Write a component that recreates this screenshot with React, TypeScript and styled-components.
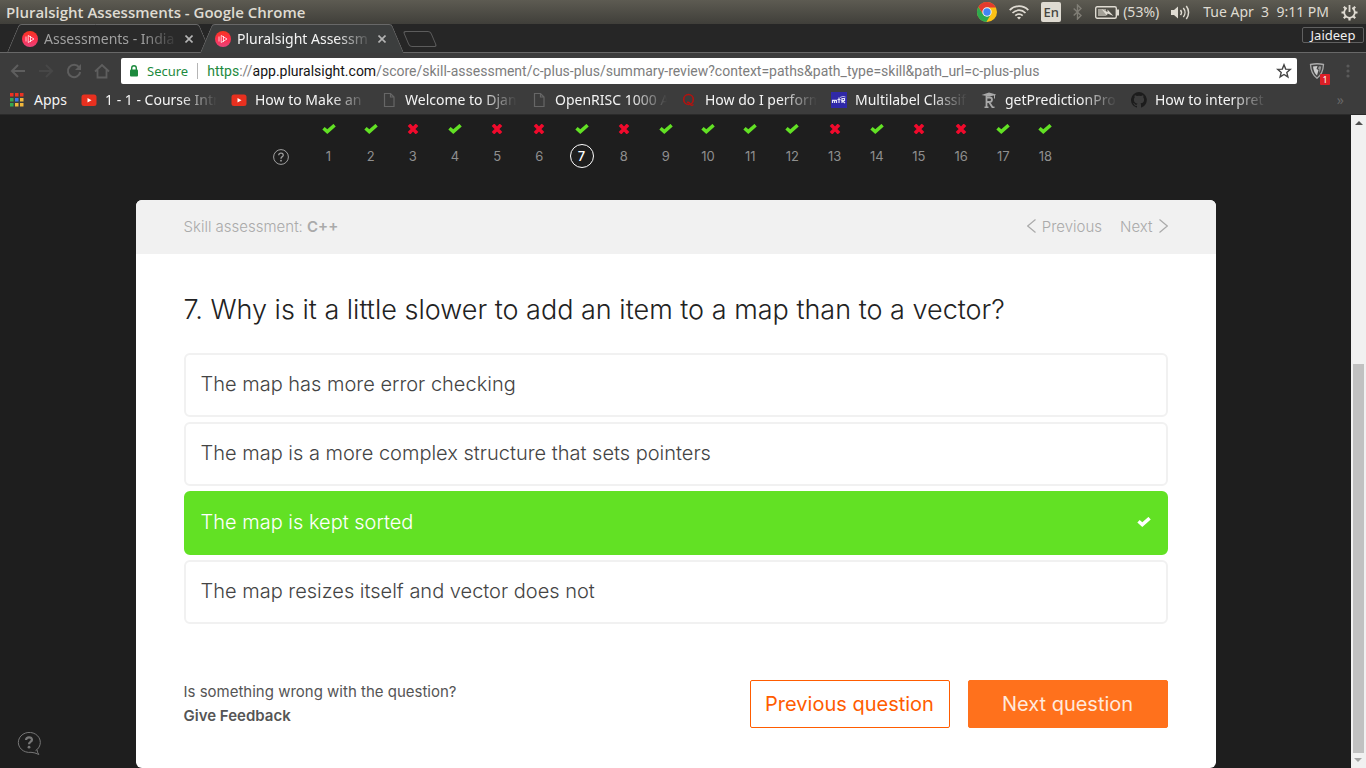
import React from "react";
import styled, { createGlobalStyle, css } from "styled-components";

const ui = `"Noto Sans", "Open Sans", sans-serif`;
const brand = `Inter, "Liberation Sans", sans-serif`;

const GlobalStyle = createGlobalStyle`
  *, *::before, *::after { box-sizing: border-box; }
  body { margin: 0; background: #1e1e1e; }
  button { font: inherit; color: inherit; background: none; border: 0; padding: 0; cursor: pointer; }
  h1, p, ul, ol { margin: 0; padding: 0; }
  ul, ol { list-style: none; }
  a { color: inherit; text-decoration: none; }
  svg { display: block; flex: none; }
`;

const Screen = styled.div`
  display: flex;
  flex-direction: column;
  min-height: 100vh;
  font-family: ${ui};
`;

/* Desktop panel */

const Panel = styled.header`
  display: flex;
  align-items: center;
  justify-content: space-between;
  height: 24px;
  padding: 0 8px 0 6px;
  background: linear-gradient(#5d5b52, #403f3a);
  color: #dfdbd2;
  font-size: 14px;
  line-height: 20px;
  white-space: nowrap;
`;

const WindowTitle = styled.strong`
  font-family: "Open Sans", sans-serif;
  font-size: 15px;
  font-weight: 600;
`;

const Indicators = styled.div`
  display: flex;
  align-items: center;
  gap: 12px;
`;

const Indicator = styled.span`
  display: flex;
  align-items: center;
  gap: 4px;
`;

const Keyboard = styled.span`
  width: 20px;
  height: 20px;
  border-radius: 2px;
  background: #dfdbd2;
  color: #45443e;
  font-size: 13px;
  font-weight: 500;
  line-height: 20px;
  text-align: center;
`;

/* Browser chrome */

const TabStrip = styled.nav`
  display: flex;
  height: 29px;
  padding: 0 2px 0 7px;
  background: #262626;
  border-bottom: 1px solid #686868;
`;

const Tab = styled.div<{ $active?: boolean }>`
  position: relative;
  z-index: ${(p) => (p.$active ? 1 : 0)};
  display: flex;
  align-items: center;
  gap: 6px;
  width: 204px;
  height: 29px;
  margin-right: -11px;
  padding: 0 18px 0 15px;
  font-size: 14px;
  color: ${(p) => (p.$active ? "#f4f4f4" : "#a0a0a0")};

  &::before,
  &::after {
    content: "";
    position: absolute;
    z-index: -1;
    top: 0;
    bottom: ${(p) => (p.$active ? 0 : 1)}px;
    width: calc(50% + 2px);
    background: ${(p) => (p.$active ? "#3c3e3e" : "#2a2a2a")};
    border-top: 1px solid #686868;
  }
  &::before {
    left: 6px;
    border-left: 1px solid #686868;
    border-top-left-radius: 3px;
    transform: skewX(-23deg);
  }
  &::after {
    right: 6px;
    border-right: 1px solid #686868;
    border-top-right-radius: 3px;
    transform: skewX(23deg);
  }
`;

const fade = css`
  overflow: hidden;
  white-space: nowrap;
  mask-image: linear-gradient(to right, #000 calc(100% - 36px), transparent);
`;

const TabTitle = styled.button`
  flex: 1;
  min-width: 0;
  text-align: left;
  ${fade}
`;

const NewTab = styled.button`
  width: 28px;
  height: 16px;
  margin: 7px 0 0 13px;
  border: 1px solid #5c5c5c;
  border-radius: 3px;
  transform: skewX(23deg);
`;

const Profile = styled.button`
  width: 62px;
  height: 16px;
  margin: 3px 0 0 auto;
  border: 1px solid #606060;
  border-radius: 2px;
  color: #f0f0f0;
  font-size: 13px;
  line-height: 14px;
`;

const Toolbar = styled.div`
  display: flex;
  align-items: center;
  height: 36px;
  padding: 0 16px 0 10px;
  background: #3c3c3c;
`;

const NavButtons = styled.div`
  display: flex;
  gap: 12px;
  margin-right: 11px;
`;

const ToolButton = styled.button<{ $dim?: boolean }>`
  color: ${(p) => (p.$dim ? "#474747" : "#5e5e5e")};
`;

const Omnibox = styled.div`
  display: flex;
  flex: 1;
  align-items: center;
  height: 26px;
  padding: 0 5px 0 8px;
  border-radius: 2px;
  background: #fff;
  font-family: Roboto, sans-serif;
  font-size: 14px;
  color: #7d7d7d;
  white-space: nowrap;
`;

const Secure = styled.span`
  display: flex;
  align-items: center;
  gap: 8px;
  margin-right: 9px;
  padding-right: 9px;
  border-right: 1px solid #b5b5b5;
  font-family: ${ui};
  font-size: 13px;
  line-height: 16px;
  color: #1d8a3e;
`;

const Green = styled.span`
  color: #1d8a3e;
`;

const Host = styled.span`
  color: #141414;
`;

const UrlPath = styled.input`
  flex: 1;
  min-width: 0;
  padding: 0;
  border: 0;
  outline: 0;
  background: none;
  color: inherit;
  font: inherit;
`;

const Extension = styled.button`
  position: relative;
  margin: 0 21px 0 12px;
`;

const Badge = styled.span`
  position: absolute;
  left: 11px;
  top: 11px;
  width: 10px;
  height: 11px;
  border-radius: 1px;
  background: #dc1f26;
  color: #fff;
  font-size: 9px;
  line-height: 11px;
  text-align: center;
`;

const Bookmarks = styled.nav`
  display: flex;
  align-items: center;
  height: 26px;
  padding: 0 22px 3px 10px;
  background: #3c3c3c;
  border-bottom: 1px solid #2a2a2a;
  color: #f4f4f4;
  font-size: 14px;
  line-height: 20px;
`;

const AppsLink = styled.a`
  display: flex;
  align-items: center;
  gap: 10px;
  width: 71px;
`;

const Bookmark = styled.a`
  display: flex;
  align-items: center;
  gap: 8px;
  width: 150px;
  padding-right: 14px;
`;

const BookmarkLabel = styled.span`
  flex: 1;
  ${fade}
`;

const More = styled.button`
  margin-left: auto;
  color: #666;
`;

/* Page */

const Viewport = styled.div`
  display: flex;
  flex: 1;
  background: #1e1e1e;
  font-family: ${brand};
`;

const Page = styled.main`
  flex: 1;
  min-width: 0;
`;

const Column = styled.div`
  width: 100%;
  max-width: 1080px;
  margin: 0 auto;
`;

const Progress = styled.div`
  display: flex;
  align-items: flex-end;
  gap: 28px;
  height: 85px;
  padding: 0 158px 32px 137px;
`;

const HelpButton = styled.button`
  height: 22px;
  color: #a0a0a0;
`;

const Steps = styled.ol`
  display: flex;
  flex: 1;
  justify-content: space-between;
`;

const Step = styled.li`
  display: flex;
  flex-direction: column;
  align-items: center;
  gap: 10px;
  width: 24px;
`;

const StepNumber = styled.button<{ $current: boolean }>`
  width: 24px;
  height: 24px;
  border-radius: 50%;
  border: 1px solid ${(p) => (p.$current ? "#fff" : "transparent")};
  color: ${(p) => (p.$current ? "#fff" : "#8f8f8f")};
  font-size: 13px;
  font-weight: ${(p) => (p.$current ? 500 : 400)};
  line-height: 22px;
`;

const Card = styled.section`
  border-radius: 6px;
  overflow: hidden;
  background: #fff;
`;

const CardHeader = styled.div`
  display: flex;
  align-items: center;
  justify-content: space-between;
  height: 54px;
  padding: 0 48px 2px;
  background: #f1f1f1;
  color: #aaa;
  font-size: 15px;
  font-weight: 300;
`;

const Skill = styled.strong`
  font-weight: 600;
`;

const Pager = styled.div`
  display: flex;
  gap: 18px;
`;

const PagerLink = styled.a`
  display: flex;
  align-items: center;
  gap: 6px;
`;

const CardBody = styled.div`
  padding: 38px 48px 40px;
`;

const Question = styled.h1`
  margin-bottom: 25px;
  color: #222;
  font-size: 27px;
  font-weight: 300;
  line-height: 36px;
`;

const Answers = styled.ul`
  display: flex;
  flex-direction: column;
  gap: 5px;
`;

const Answer = styled.li<{ $correct: boolean }>`
  display: flex;
  align-items: center;
  justify-content: space-between;
  height: 64px;
  padding: 0 15px 2px;
  border: 2px solid ${(p) => (p.$correct ? "#62e124" : "#f1f1f1")};
  border-radius: 6px;
  background: ${(p) => (p.$correct ? "#62e124" : "#fff")};
  color: ${(p) => (p.$correct ? "#fff" : "#444")};
  font-size: 20px;
  font-weight: 300;
`;

const Footer = styled.footer`
  display: flex;
  align-items: center;
  justify-content: space-between;
  margin-top: 56px;
`;

const Feedback = styled.p`
  color: #555;
  font-size: 15px;
  line-height: 24px;
`;

const FeedbackLink = styled.a`
  display: block;
  font-weight: 600;
`;

const Actions = styled.div`
  display: flex;
  gap: 18px;
`;

const ActionButton = styled.button<{ $primary?: boolean }>`
  width: 200px;
  height: 48px;
  border: 1px solid ${(p) => (p.$primary ? "#ff711c" : "#ff5c00")};
  border-radius: 2px;
  background: ${(p) => (p.$primary ? "#ff711c" : "#fff")};
  color: ${(p) => (p.$primary ? "#ffe9dc" : "#ff5c00")};
  font-size: 20px;
`;

const Scrollbar = styled.div`
  display: flex;
  flex-direction: column;
  width: 15px;
  padding: 0 2px;
  background: #f1f1f1;
`;

const Arrow = styled.div<{ $down?: boolean }>`
  display: flex;
  align-items: center;
  justify-content: center;
  height: 15px;
  transform: ${(p) => (p.$down ? "rotate(180deg)" : "none")};
`;

const Track = styled.div`
  display: grid;
  flex: 1;
  grid-template-rows: 3fr 5fr;
`;

const Thumb = styled.div`
  grid-row: 2;
  background: #c1c1c1;
`;

const Support = styled.button`
  position: fixed;
  left: 17px;
  bottom: 12px;
  color: #777;
`;

/* Icons */

const Check = () => (
  <svg width="14" height="10" viewBox="0 0 14 10" fill="none" stroke="currentColor" strokeWidth="3.500" strokeLinejoin="miter">
    <path d="M1.500 4.200 5.300 7.600 12.600 1.200" />
  </svg>
);

const Cross = () => (
  <svg width="14" height="10" viewBox="0 0 14 10" fill="none" stroke="currentColor" strokeWidth="3.600">
    <path d="m3 .8 8 8.400M11 .8 3 9.200" />
  </svg>
);

const Play = () => (
  <svg width="16" height="16" viewBox="0 0 16 16">
    <defs>
      <linearGradient id="play" x1="0" y1="0" x2="0" y2="1">
        <stop offset="0" stopColor="#f5351f" />
        <stop offset="0.5" stopColor="#ff2f4b" />
        <stop offset="1" stopColor="#e8447c" />
      </linearGradient>
    </defs>
    <circle cx="8" cy="8" r="8" fill="url(#play)" />
    <path d="M4 5.500v5M6.200 4.500v7L12 8 6.200 4.500M8.500 5v6" fill="none" stroke="#fff" strokeOpacity="0.75" />
  </svg>
);

const Close = () => (
  <svg width="8" height="8" viewBox="0 0 8 8" stroke="#b4b4b4" strokeWidth="1.6">
    <path d="m.5.500 7 7M7.500.5l-7 7" />
  </svg>
);

const ChromeLogo = () => (
  <svg width="20" height="20" viewBox="0 0 20 20">
    <circle cx="10" cy="10" r="10" fill="#fbc116" />
    <path d="M10 5.500h8.900A10 10 0 0 0 1.340 5l4.700 7.300Z" fill="#e33b2e" />
    <path d="M1.340 5A10 10 0 0 0 9.300 20l4.600-7.700L6 12.300Z" fill="#2da94f" />
    <circle cx="10" cy="10" r="4.700" fill="#f4f4f4" />
    <circle cx="10" cy="10" r="3.700" fill="#4285f4" />
  </svg>
);

const Wifi = () => (
  <svg width="20" height="15" viewBox="0 0 20 15" fill="none" stroke="currentColor" strokeWidth="1.7">
    <path d="M.7 5.100a13 13 0 0 1 18.600 0M3.500 8a9 9 0 0 1 13 0M6.300 10.700a5.200 5.200 0 0 1 7.400 0" />
    <path d="m8 12.600 2 2 2-2a3 3 0 0 0-4 0Z" fill="currentColor" stroke="none" />
  </svg>
);

const Bluetooth = () => (
  <svg width="10" height="16" viewBox="0 0 10 16" fill="none" stroke="#807e76" strokeWidth="1.4">
    <path d="m.7 4.500 7.300 7L4.500 15V1L8 4.500l-7.300 7" />
  </svg>
);

const Battery = () => (
  <svg width="24" height="13" viewBox="0 0 24 13" fill="none" stroke="currentColor" strokeWidth="1.4">
    <rect x=".7" y=".7" width="20.600" height="11.600" rx="1.500" />
    <path d="M23 3.500v6" strokeWidth="2" />
    <path d="M3 3h8v7H3Z" fill="#a3a097" stroke="none" />
    <path d="m6.500 3 6 3V3.500l6 6.500-6-2.500-.500 2.300Z" fill="currentColor" stroke="none" />
  </svg>
);

const Volume = () => (
  <svg width="20" height="15" viewBox="0 0 20 15" fill="none" stroke="currentColor" strokeWidth="1.500">
    <path d="M0 5h3l4-3.500v12l-4-3.500H0Z" fill="currentColor" stroke="none" />
    <path d="M9.500 5a4 4 0 0 1 0 5M12.300 3a7 7 0 0 1 0 9M15.300 1a10.500 10.500 0 0 1 0 13" />
  </svg>
);

const PowerGear = () => (
  <svg width="17" height="17" viewBox="0 0 17 17" fill="none" stroke="currentColor">
    <path d="M5.700 4a5.300 5.300 0 1 0 5.600 0" strokeWidth="1.800" />
    <path d="M8.500 1v7" strokeWidth="1.800" />
    <path d="M.5 8.500h3M13.500 8.500h3M8.500 13.500v3M2.800 2.800l2 2M14.200 2.800l-2 2M2.800 14.200l2-2M14.200 14.200l-2-2" strokeWidth="2.200" />
  </svg>
);

const stroke = { fill: "none", stroke: "currentColor", strokeWidth: 2 };

const Back = ({ flip }: { flip?: boolean }) => (
  <svg width="16" height="16" viewBox="0 0 16 16" {...stroke}>
    <path d={flip ? "M1 8h13M8 2l6 6-6 6" : "M15 8H2M8 2 2 8l6 6"} />
  </svg>
);

const Reload = () => (
  <svg width="16" height="16" viewBox="0 0 16 16" {...stroke}>
    <path d="M13 4.200A6.200 6.200 0 1 0 14.200 9" />
    <path d="M15 1v6H9Z" fill="currentColor" stroke="none" />
  </svg>
);

const Home = () => (
  <svg width="16" height="16" viewBox="0 0 16 16" {...stroke} strokeWidth={1.800}>
    <path d="M1 8.500 8 2l7 6.500M3.500 7v7.500h9V7" />
  </svg>
);

const Lock = () => (
  <svg width="10" height="12" viewBox="0 0 10 12">
    <rect x="1" y="4.500" width="8" height="7" rx="1" fill="#1d8a3e" />
    <path d="M2.700 5V3a2.300 2.300 0 0 1 4.600 0v2" fill="none" stroke="#1d8a3e" strokeWidth="1.400" />
  </svg>
);

const Star = () => (
  <svg width="16" height="16" viewBox="0 0 16 16" fill="none" stroke="#444" strokeWidth="1.400">
    <path d="m8 1.800 1.700 4.300 4.600.3-3.500 3 1.100 4.500L8 11.500l-3.900 2.400 1.100-4.500-3.500-3 4.600-.3Z" />
  </svg>
);

const Shield = () => (
  <svg width="16" height="16" viewBox="0 0 16 16">
    <path d="M1.500 1.500q6.500-1.500 13 0Q14 11 8 15.300 2 11 1.500 1.500Z" fill="#444" stroke="#aaa" strokeWidth="1.300" />
    <path d="M4 3.500Q6 3 8.500 3L7.500 6l2 1L8 12.500Q4.500 9.500 4 3.500Z" fill="#ccc" />
    <path d="M10 3.200q1.500 0 2.200.4-.300 4-2.200 6.300l.300-3.500-1.300-1Z" fill="#999" />
  </svg>
);

const Dots = () => (
  <svg width="4" height="14" viewBox="0 0 4 14" fill="#5a5a5a">
    <circle cx="2" cy="2" r="1.600" />
    <circle cx="2" cy="7" r="1.600" />
    <circle cx="2" cy="12" r="1.600" />
  </svg>
);

const appColors = ["#ea3323", "#ea3323", "#ea3323", "#35a853", "#3b78e7", "#f2b83c", "#35a853", "#f2b83c", "#f2b83c"];

const AppsGrid = () => (
  <svg width="14" height="14" viewBox="0 0 14 14">
    {appColors.map((c, i) => (
      <rect key={i} x={(i % 3) * 5} y={Math.floor(i / 3) * 5} width="3.500" height="3.500" fill={c} />
    ))}
  </svg>
);

const YouTube = () => (
  <svg width="16" height="16" viewBox="0 0 16 16">
    <rect x=".5" y="2.500" width="15" height="11.500" rx="2.500" fill="#e8301f" />
    <path d="M6.500 6v4.500l4-2.250Z" fill="#fff" />
  </svg>
);

const Doc = () => (
  <svg width="16" height="16" viewBox="0 0 16 16" fill="none" stroke="#666" strokeWidth="1.200">
    <path d="M3.500 1.500h6l3.500 3.500v9.500H3.500ZM9.500 1.500V5H13" />
  </svg>
);

const Quora = () => (
  <svg width="16" height="16" viewBox="0 0 16 16" fill="none" stroke="#b5120f">
    <ellipse cx="7.500" cy="7.500" rx="4.800" ry="5" strokeWidth="1.600" />
    <path d="M6 10.500q2-.8 3 1.500 1.200 2.200 3.500.5" strokeWidth="1.500" />
  </svg>
);

const Mtr = () => (
  <svg width="16" height="16" viewBox="0 0 16 16">
    <rect width="16" height="16" fill="#3029a8" />
    <path d="M1.500 11V8M3.500 11V8M5.500 11V8M1 8.300h4.800M8 5.500V11M6.500 7.500h3M11 11V6.500h2.500v2H11l3 2.500" fill="none" stroke="#e5e3f7" strokeWidth="1.200" />
    <path d="M9 5.500q3-2 5.500-.5" fill="none" stroke="#b9b5ea" />
  </svg>
);

const Scholar = () => (
  <svg width="16" height="16" viewBox="0 0 16 16" fill="#a9a9a9">
    <path d="M.5 3 8 .5l7 2-1 1v3h-1v-3l-5 1Z" />
    <path d="M5.500 4v11M3.500 15.300h4M5 5.500h3.500q2.500 0 2.500 2.200T8.500 10H6M8 10l3.500 5.300h2" fill="none" stroke="#a9a9a9" strokeWidth="1.800" />
  </svg>
);

const GitHub = () => (
  <svg width="16" height="16" viewBox="0 0 16 16" fill="#1c1c1c">
    <path d="M8 0a8 8 0 0 0-2.500 15.600c.4.100.5-.2.500-.4v-1.400c-2.200.5-2.700-1-2.700-1-.4-.9-.9-1.200-.9-1.200-.7-.5.100-.5.100-.5.800.1 1.200.8 1.200.8.700 1.300 1.900.9 2.300.7.100-.5.300-.9.500-1.100-1.800-.2-3.600-.9-3.600-4 0-.9.300-1.600.8-2.100-.1-.2-.4-1 .1-2.100 0 0 .7-.2 2.200.8a7.600 7.600 0 0 1 4 0c1.500-1 2.200-.8 2.200-.8.400 1.100.2 1.900.1 2.100.5.600.8 1.300.8 2.100 0 3.100-1.900 3.700-3.600 3.900.3.300.5.800.5 1.500v2.200c0 .2.100.5.600.4A8 8 0 0 0 8 0Z" />
  </svg>
);

const Question16 = () => (
  <svg width="16" height="16" viewBox="0 0 16 16" fill="none" stroke="currentColor">
    <circle cx="8" cy="8" r="7.400" />
    <path d="M5.700 6.200q.2-2 2.300-2t2.300 1.900q0 1-1.300 1.800Q8 8.500 8 9.700" strokeWidth="1.300" />
    <circle cx="8" cy="11.700" r=".9" fill="currentColor" stroke="none" />
  </svg>
);

const Chevron = ({ left }: { left?: boolean }) => (
  <svg width="9" height="14" viewBox="0 0 9 14" fill="none" stroke="currentColor" strokeWidth="1.200">
    <path d={left ? "M8.500.5.700 7l7.800 6.500" : "M.5.500 8.300 7 .5 13.500"} />
  </svg>
);

const SupportBubble = () => (
  <svg width="24" height="24" viewBox="0 0 24 24" fill="none" stroke="currentColor">
    <path d="M18.500 18.700A11 10 0 1 0 14 20.300q4 .2 7.800 2.200Q20.200 20.500 20 17.600" />
    <path d="M9 8q.3-2.700 3-2.700t3 2.400q0 1.200-1.500 2.100-1.500 1-1.500 2.500" strokeWidth="2.200" />
    <circle cx="12" cy="15.200" r="1.400" fill="currentColor" stroke="none" />
  </svg>
);

/* Data */

const bookmarks: [() => React.JSX.Element, string][] = [
  [YouTube, "1 - 1 - Course Intr"],
  [YouTube, "How to Make an"],
  [Doc, "Welcome to Djan"],
  [Doc, "OpenRISC 1000 A"],
  [Quora, "How do I perform"],
  [Mtr, "Multilabel Classifi"],
  [Scholar, "getPredictionPro"],
  [GitHub, "How to interpret"],
];

const wrong = new Set([3, 5, 6, 8, 13, 15, 16]);
const steps = Array.from({ length: 18 }, (_, i) => i + 1);

const StepMark = styled.span<{ $wrong: boolean }>`
  color: ${(p) => (p.$wrong ? "#f00a2c" : "#62e124")};
`;

const answers = [
  { text: "The map has more error checking" },
  { text: "The map is a more complex structure that sets pointers" },
  { text: "The map is kept sorted", correct: true },
  { text: "The map resizes itself and vector does not" },
];

export default function App() {
  return (
    <Screen>
      <GlobalStyle />
      <Panel>
        <WindowTitle>Pluralsight Assessments - Google Chrome</WindowTitle>
        <Indicators>
          <ChromeLogo />
          <Wifi />
          <Keyboard>En</Keyboard>
          <Bluetooth />
          <Indicator>
            <Battery />
            (53%)
          </Indicator>
          <Volume />
          <Indicator>Tue Apr&nbsp; 3&nbsp; 9:11 PM</Indicator>
          <PowerGear />
        </Indicators>
      </Panel>

      <TabStrip>
        <Tab>
          <Play />
          <TabTitle>Assessments - India</TabTitle>
          <button aria-label="Close tab"><Close /></button>
        </Tab>
        <Tab $active>
          <Play />
          <TabTitle>Pluralsight Assessm</TabTitle>
          <button aria-label="Close tab"><Close /></button>
        </Tab>
        <NewTab aria-label="New tab" />
        <Profile>Jaideep</Profile>
      </TabStrip>

      <Toolbar>
        <NavButtons>
          <ToolButton aria-label="Back"><Back /></ToolButton>
          <ToolButton $dim aria-label="Forward"><Back flip /></ToolButton>
          <ToolButton aria-label="Reload"><Reload /></ToolButton>
          <ToolButton aria-label="Home"><Home /></ToolButton>
        </NavButtons>
        <Omnibox>
          <Secure>
            <Lock />
            Secure
          </Secure>
          <Green>https</Green>://<Host>app.pluralsight.com</Host>
          <UrlPath
            aria-label="Address"
            defaultValue="/score/skill-assessment/c-plus-plus/summary-review?context=paths&path_type=skill&path_url=c-plus-plus"
          />
          <button aria-label="Bookmark this page"><Star /></button>
        </Omnibox>
        <Extension aria-label="Extension">
          <Shield />
          <Badge>1</Badge>
        </Extension>
        <button aria-label="Menu"><Dots /></button>
      </Toolbar>

      <Bookmarks>
        <AppsLink href="#apps">
          <AppsGrid />
          Apps
        </AppsLink>
        {bookmarks.map(([Icon, label]) => (
          <Bookmark key={label} href="#bookmark">
            <Icon />
            <BookmarkLabel>{label}</BookmarkLabel>
          </Bookmark>
        ))}
        <More aria-label="More bookmarks">»</More>
      </Bookmarks>

      <Viewport>
        <Page>
          <Column>
            <Progress>
              <HelpButton aria-label="Help"><Question16 /></HelpButton>
              <Steps>
                {steps.map((n) => (
                  <Step key={n}>
                    <StepMark $wrong={wrong.has(n)}>{wrong.has(n) ? <Cross /> : <Check />}</StepMark>
                    <StepNumber $current={n === 7}>{n}</StepNumber>
                  </Step>
                ))}
              </Steps>
            </Progress>

            <Card>
              <CardHeader>
                <span>
                  Skill assessment: <Skill>C++</Skill>
                </span>
                <Pager>
                  <PagerLink href="#previous"><Chevron left />Previous</PagerLink>
                  <PagerLink href="#next">Next<Chevron /></PagerLink>
                </Pager>
              </CardHeader>
              <CardBody>
                <Question>7. Why is it a little slower to add an item to a map than to a vector?</Question>
                <Answers>
                  {answers.map((a) => (
                    <Answer key={a.text} $correct={!!a.correct}>
                      {a.text}
                      {a.correct && <Check />}
                    </Answer>
                  ))}
                </Answers>
                <Footer>
                  <Feedback>
                    Is something wrong with the question?
                    <FeedbackLink href="#feedback">Give Feedback</FeedbackLink>
                  </Feedback>
                  <Actions>
                    <ActionButton>Previous question</ActionButton>
                    <ActionButton $primary>Next question</ActionButton>
                  </Actions>
                </Footer>
              </CardBody>
            </Card>
          </Column>
        </Page>
        <Scrollbar>
          <Arrow>
            <svg width="8" height="4" viewBox="0 0 8 4" fill="#505050"><path d="M0 4 4 0l4 4Z" /></svg>
          </Arrow>
          <Track>
            <Thumb />
          </Track>
          <Arrow $down>
            <svg width="8" height="4" viewBox="0 0 8 4" fill="#a3a3a3"><path d="M0 4 4 0l4 4Z" /></svg>
          </Arrow>
        </Scrollbar>
      </Viewport>
      <Support aria-label="Support"><SupportBubble /></Support>
    </Screen>
  );
}
